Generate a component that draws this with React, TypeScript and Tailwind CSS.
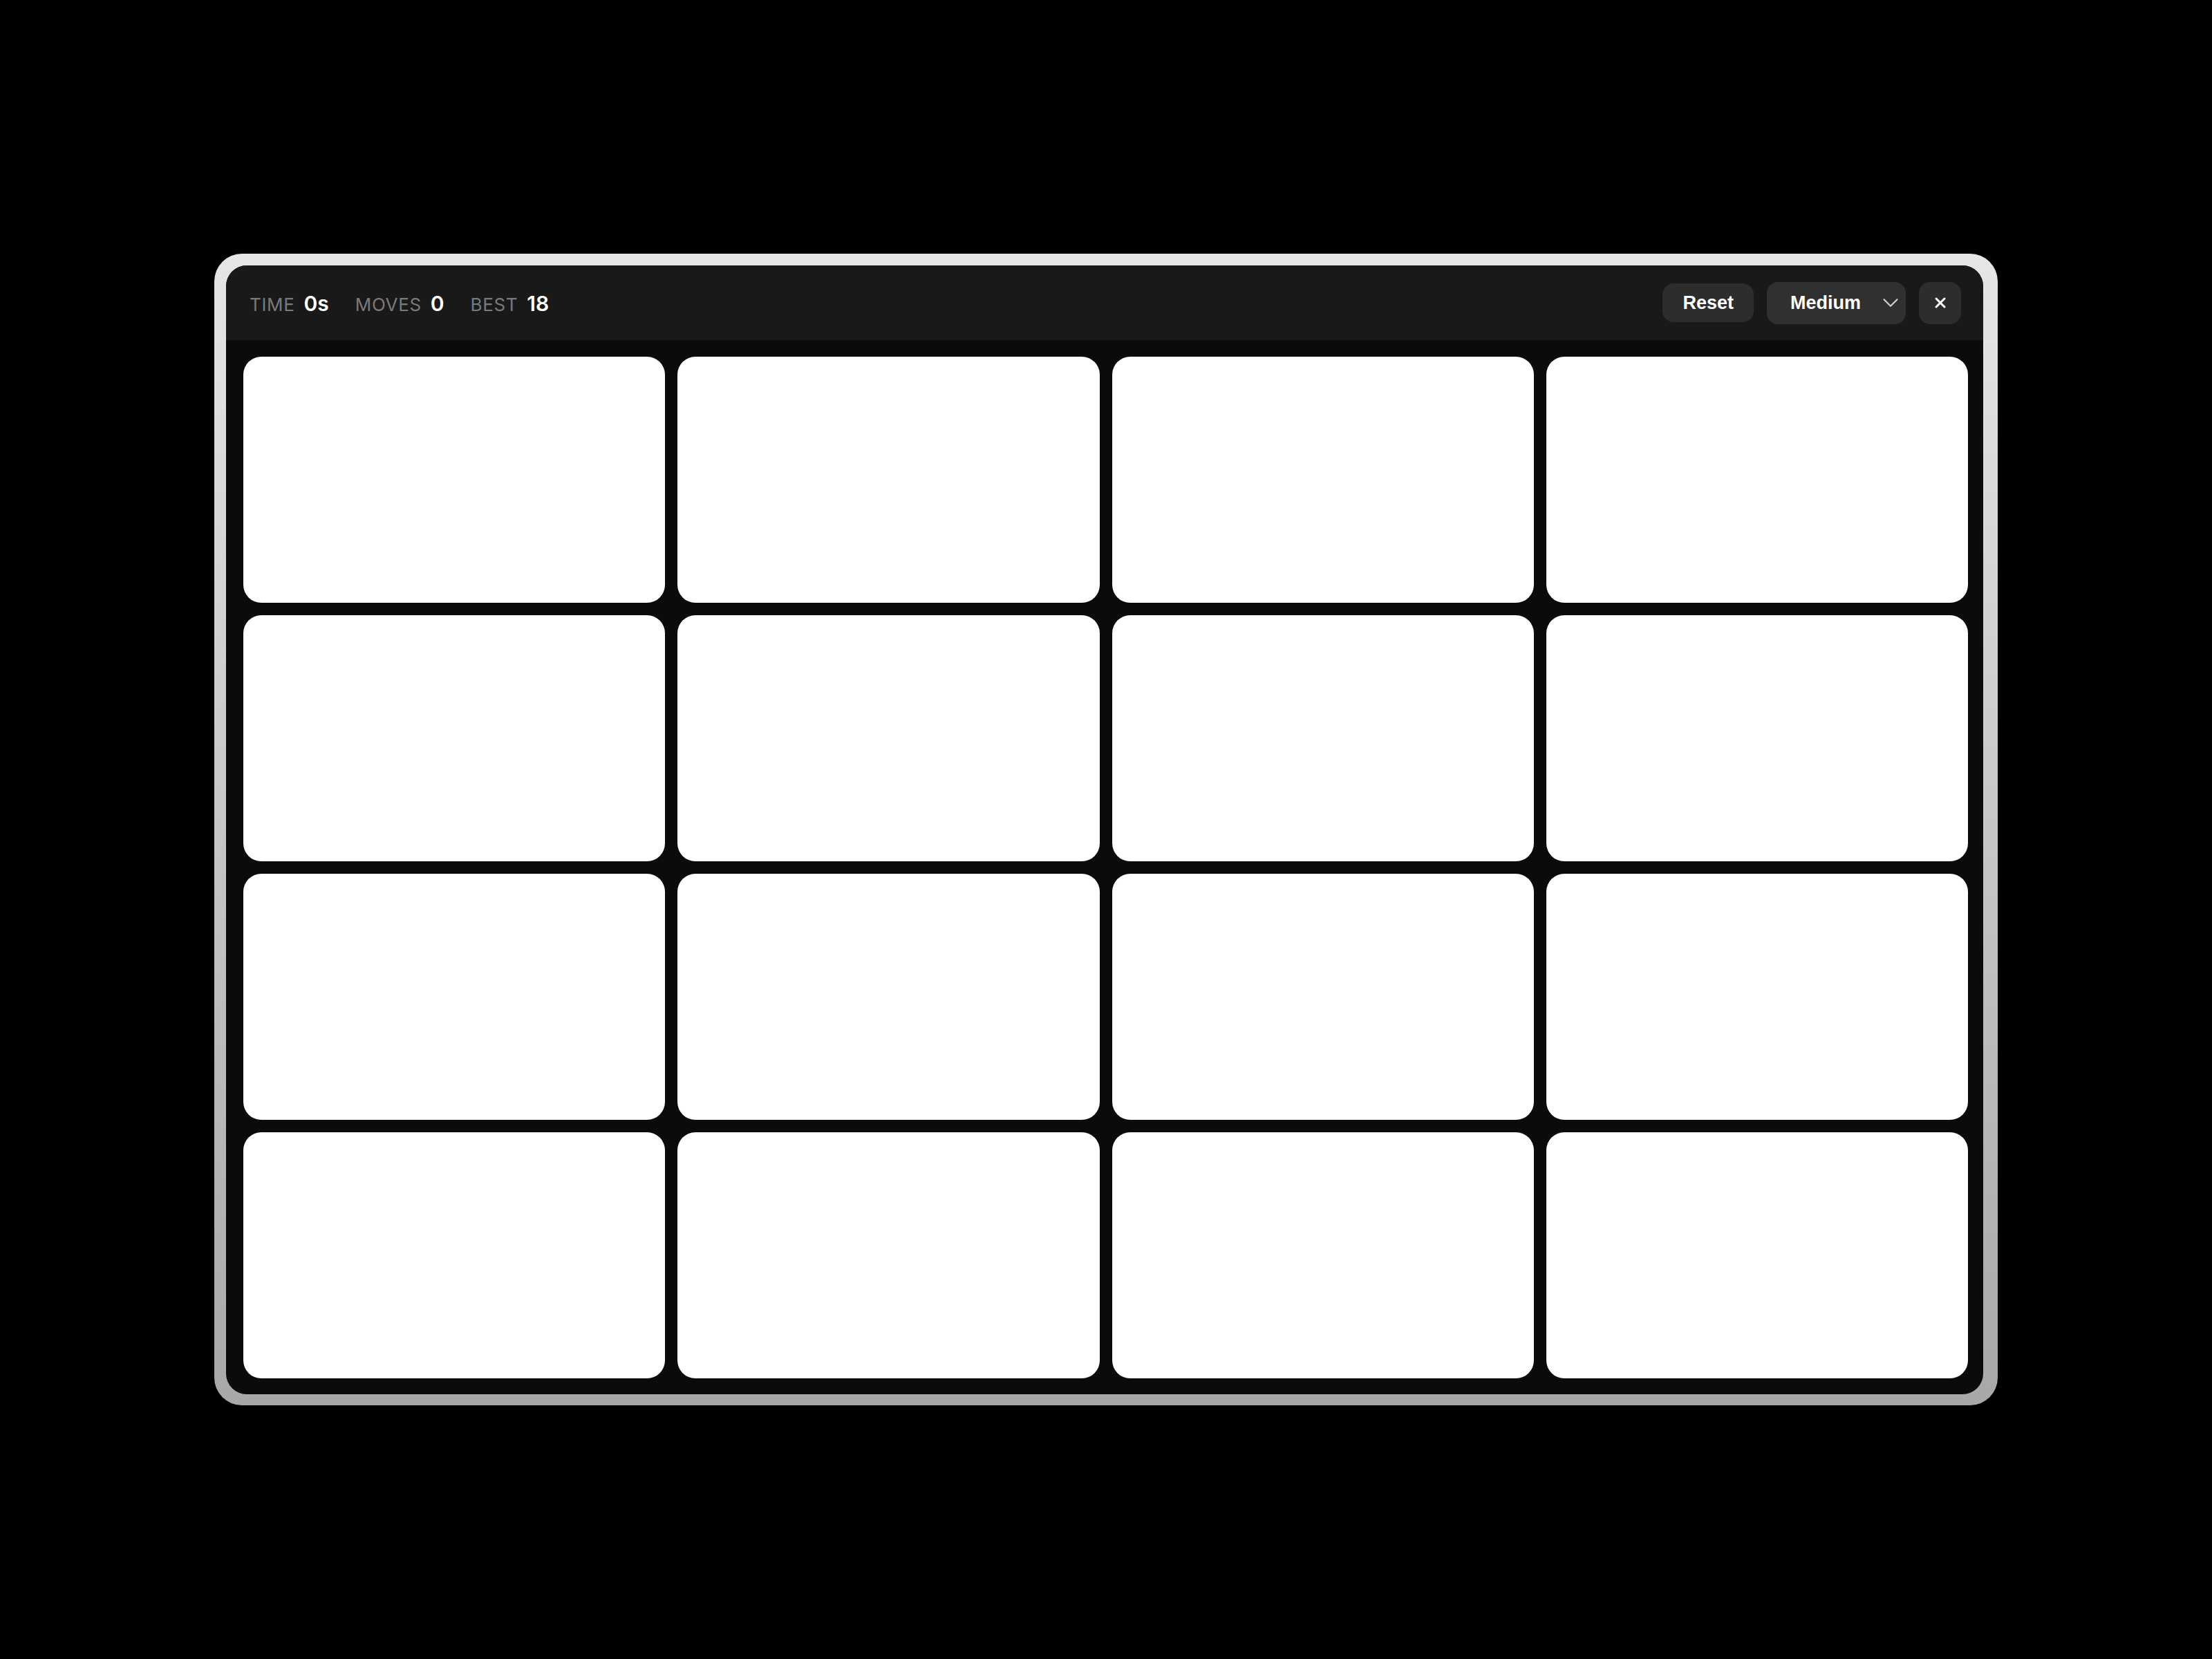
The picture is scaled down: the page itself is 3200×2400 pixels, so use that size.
import { X, ChevronDown } from "lucide-react";

const stats = [
  { label: "TIME", value: "0s" },
  { label: "MOVES", value: "0" },
  { label: "BEST", value: "18" },
];

const cards = Array.from({ length: 16 }, (_, i) => i);

export default function App() {
  return (
    <div className="min-h-screen w-full bg-black flex items-center justify-center font-['Inter',sans-serif]">
      <div className="w-[2580px] rounded-[40px] bg-linear-to-b from-[#e6e6e6] to-[#a8a8a8] pt-[17px] pl-[17px] pr-[21px] pb-[16px]">
        <div className="rounded-[30px] overflow-hidden bg-[#0b0b0b] flex flex-col">
          <div className="h-[108px] bg-[#191919] flex items-center justify-between pl-[34px] pr-[32px]">
            <div className="flex items-center gap-[38px] pt-[3px]">
              {stats.map((s) => (
                <div key={s.label} className="flex items-baseline gap-[13px]">
                  <span className="text-[26px] tracking-[0.025em] text-[#7a7a7a]">{s.label}</span>
                  <span className="text-[30px] font-semibold text-white">{s.value}</span>
                </div>
              ))}
            </div>

            <div className="flex items-center gap-[19px] font-['Liberation_Sans',Arial,sans-serif]">
              <button className="h-[56px] px-[29px] rounded-[16px] bg-[#2d2d2d] text-[27px] font-bold text-white">
                Reset
              </button>
              <button className="h-[61px] w-[201px] rounded-[16px] bg-[#303030] flex items-center justify-between pl-[34px] pr-[3px] text-[27px] font-bold text-white">
                <span>Medium</span>
                <ChevronDown size={38} strokeWidth={1.4} className="text-[#d0d0d0]" />
              </button>
              <button className="h-[61px] w-[61px] rounded-[16px] bg-[#2d2d2d] flex items-center justify-center text-white">
                <X size={24} strokeWidth={3} />
              </button>
            </div>
          </div>

          <div className="grid grid-cols-4 gap-[18px] pl-[25px] pr-[22px] pt-[24px] pb-[23px]">
            {cards.map((i) => (
              <div key={i} className="h-[356px] rounded-[26px] bg-white" />
            ))}
          </div>
        </div>
      </div>
    </div>
  );
}
